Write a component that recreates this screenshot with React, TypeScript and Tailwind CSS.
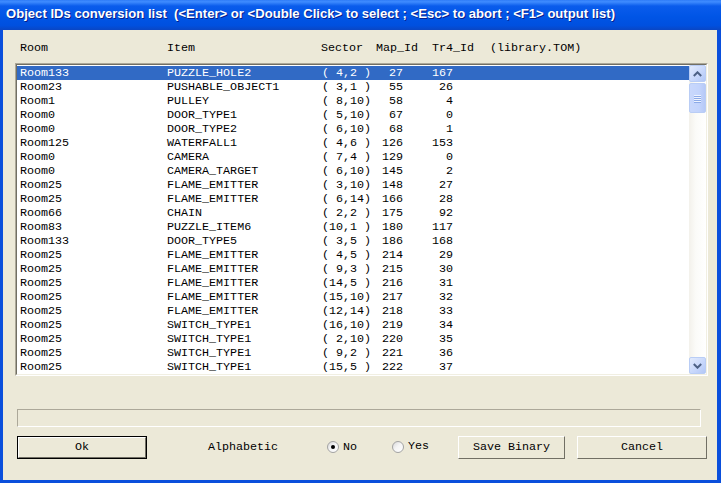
import React from "react";

const rows: [string, string, string, string, string][] = [
  ["Room133", "PUZZLE_HOLE2", "( 4,2 )", "27", "167"],
  ["Room23", "PUSHABLE_OBJECT1", "( 3,1 )", "55", "26"],
  ["Room1", "PULLEY", "( 8,10)", "58", "4"],
  ["Room0", "DOOR_TYPE1", "( 5,10)", "67", "0"],
  ["Room0", "DOOR_TYPE2", "( 6,10)", "68", "1"],
  ["Room125", "WATERFALL1", "( 4,6 )", "126", "153"],
  ["Room0", "CAMERA", "( 7,4 )", "129", "0"],
  ["Room0", "CAMERA_TARGET", "( 6,10)", "145", "2"],
  ["Room25", "FLAME_EMITTER", "( 3,10)", "148", "27"],
  ["Room25", "FLAME_EMITTER", "( 6,14)", "166", "28"],
  ["Room66", "CHAIN", "( 2,2 )", "175", "92"],
  ["Room83", "PUZZLE_ITEM6", "(10,1 )", "180", "117"],
  ["Room133", "DOOR_TYPE5", "( 3,5 )", "186", "168"],
  ["Room25", "FLAME_EMITTER", "( 4,5 )", "214", "29"],
  ["Room25", "FLAME_EMITTER", "( 9,3 )", "215", "30"],
  ["Room25", "FLAME_EMITTER", "(14,5 )", "216", "31"],
  ["Room25", "FLAME_EMITTER", "(15,10)", "217", "32"],
  ["Room25", "FLAME_EMITTER", "(12,14)", "218", "33"],
  ["Room25", "SWITCH_TYPE1", "(16,10)", "219", "34"],
  ["Room25", "SWITCH_TYPE1", "( 2,10)", "220", "35"],
  ["Room25", "SWITCH_TYPE1", "( 9,2 )", "221", "36"],
  ["Room25", "SWITCH_TYPE1", "(15,5 )", "222", "37"],
];

const mono = "font-['Liberation_Mono','Courier_New',monospace] text-[11.7px]";

function ScrollBtn({ up }: { up: boolean }) {
  return (
    <div className="w-[17px] h-[17px] rounded-[2px] border border-[#b9cdf5] bg-[linear-gradient(135deg,#e2ebfd_0%,#c6d6fb_60%,#b2c7f6_100%)] flex items-center justify-center">
      <svg width="9" height="6" viewBox="0 0 9 6">
        {up ? (
          <polyline points="0.8,5 4.5,1.3 8.2,5" fill="none" stroke="#4d6185" strokeWidth="2" />
        ) : (
          <polyline points="0.8,1 4.5,4.7 8.2,1" fill="none" stroke="#4d6185" strokeWidth="2" />
        )}
      </svg>
    </div>
  );
}

function Button({ label, w, isDefault }: { label: string; w: string; isDefault?: boolean }) {
  const inner = (
    <div className="h-full w-full border-t border-l border-white border-b border-r border-b-[#716f64] border-r-[#716f64] bg-[#ece9d8] flex items-center justify-center">
      <span className={`${mono} text-black leading-none`}>{label}</span>
    </div>
  );
  if (isDefault) {
    return <div className={`${w} h-[23px] border border-black`}>{inner}</div>;
  }
  return <div className={`${w} h-[23px] shadow-[inset_-1px_-1px_0_#aca899]`}>{inner}</div>;
}

function Radio({ checked }: { checked?: boolean }) {
  return (
    <div className="w-[12px] h-[12px] rounded-full border border-[#a3a3a3] bg-[linear-gradient(135deg,#d8d8d8_0%,#f4f4f4_45%,#ffffff_100%)] flex items-center justify-center">
      {checked && <div className="w-[4px] h-[4px] rounded-full bg-black" />}
    </div>
  );
}

export default function App() {
  return (
    <div className="w-[721px] h-[483px] bg-[#0a4fdc] flex flex-col overflow-hidden">
      <div className="h-[30px] shrink-0 bg-[linear-gradient(180deg,#2f7cf7_0%,#3f8cff_6%,#0a5cec_20%,#0055e6_55%,#0050df_85%,#0a46c4_100%)] flex items-center pl-[6px] pb-[2px]">
        <span className="font-['Liberation_Sans',Arial,sans-serif] font-bold text-[13.1px] text-white whitespace-pre [text-shadow:1px_1px_0_#0a1e8a]">
          {"Object IDs conversion list  (<Enter> or <Double Click> to select ; <Esc> to abort ; <F1> output list)"}
        </span>
      </div>
      <div className="flex-1 ml-[3px] mr-[4px] mb-[3px] bg-[#ece9d8] flex flex-col">
        {/* header */}
        <div className={`${mono} mt-[11px] h-[14px] leading-[14px] flex pl-[17px] text-black whitespace-pre`}>
          <span className="w-[147px]">Room</span>
          <span className="w-[154px]">Item</span>
          <span className="w-[55px]">Sector</span>
          <span className="w-[56px]">Map_Id</span>
          <span className="w-[58px]">Tr4_Id</span>
          <span>(library.TOM)</span>
        </div>
        {/* list */}
        <div className="mt-[8px] ml-[12px] w-[693px] h-[313px] border border-t-[#aca899] border-l-[#aca899] border-b-white border-r-white">
          <div className="w-full h-full border border-t-[#716f64] border-l-[#716f64] border-b-[#f1efe2] border-r-[#f1efe2] bg-white flex">
            <div className="flex-1 pt-[1px] overflow-hidden">
              {rows.map((r, i) => (
                <div
                  key={i}
                  className={`${mono} h-[14px] leading-[14px] flex pl-[3px] whitespace-pre ${i === 0 ? "bg-[#316ac5] text-white" : "text-black"}`}
                >
                  <span className="w-[147px]">{r[0]}</span>
                  <span className="w-[155px]">{r[1]}</span>
                  <span className="w-[54px]">{r[2]}</span>
                  <span className="w-[27px] text-right">{r[3]}</span>
                  <span className="w-[50px] text-right">{r[4]}</span>
                </div>
              ))}
            </div>
            <div className="w-[17px] flex flex-col bg-[linear-gradient(90deg,#f3f1eb_0%,#fbfbf8_40%,#ffffff_100%)]">
              <ScrollBtn up />
              <div className="mt-[1px] h-[30px] w-[17px] rounded-[2px] border border-[#b9cdf5] bg-[linear-gradient(90deg,#c9d8fc_0%,#c3d4fc_60%,#b6c9f7_100%)] flex flex-col items-center justify-center gap-[1px]">
                <div className="w-[7px] h-[1px] bg-[#eef3fe] shadow-[0_1px_0_#8caae8]" />
                <div className="w-[7px] h-[1px] bg-[#eef3fe] shadow-[0_1px_0_#8caae8]" />
                <div className="w-[7px] h-[1px] bg-[#eef3fe] shadow-[0_1px_0_#8caae8]" />
                <div className="w-[7px] h-[1px] bg-[#eef3fe] shadow-[0_1px_0_#8caae8]" />
              </div>
              <div className="flex-1" />
              <ScrollBtn up={false} />
            </div>
          </div>
        </div>
        {/* status field */}
        <div className="mt-[33px] ml-[14px] w-[684px] h-[18px] border border-t-[#aca899] border-l-[#aca899] border-b-white border-r-white" />
        {/* buttons row */}
        <div className="mt-[9px] ml-[14px] flex items-center">
          <Button label="Ok" w="w-[130px]" isDefault />
          <div className={`${mono} w-[180px] pl-[61px] text-black`}>Alphabetic</div>
          <div className="w-[65px] flex items-center">
            <Radio checked />
            <span className={`${mono} ml-[4px] text-black`}>No</span>
          </div>
          <div className="w-[66px] flex items-center">
            <Radio />
            <span className={`${mono} ml-[4px] text-black -mt-[2px]`}>Yes</span>
          </div>
          <Button label="Save Binary" w="w-[107px]" />
          <div className="ml-[12px]">
            <Button label="Cancel" w="w-[130px]" />
          </div>
        </div>
      </div>
    </div>
  );
}
